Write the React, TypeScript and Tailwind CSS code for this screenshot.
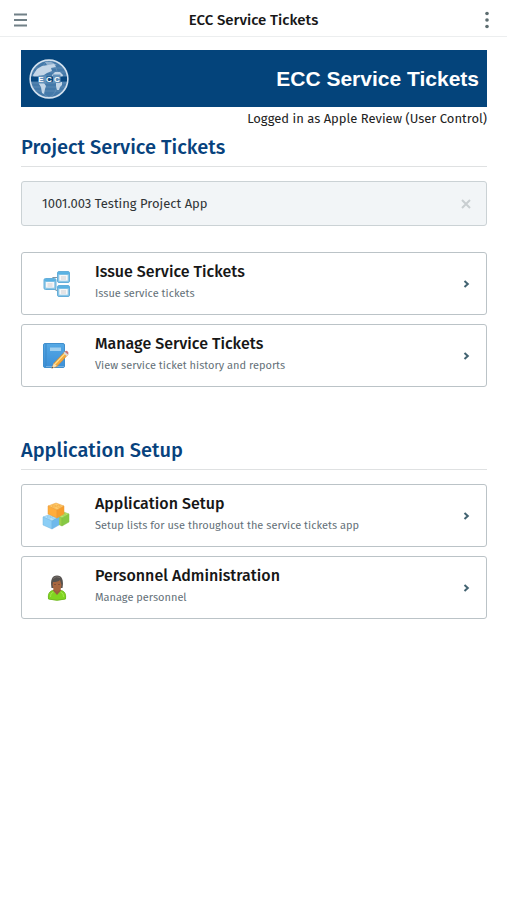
import { useState, type ReactNode } from 'react';

function GlobeLogo() {
  return (
    <svg viewBox="0 0 40 40" className="size-10" role="img" aria-label="ECC">
      <circle cx="20" cy="20" r="18.800" fill="#4479a9" stroke="#d3e1ee" strokeWidth="1.700" />
      <g stroke="#8fb0cf" strokeWidth=".6" fill="none" opacity=".55">
        <path d="M6 9h28M3 13h34M2 17h36M2 24h36M3 28h34M6 32h28" />
        <ellipse cx="20" cy="20" rx="9" ry="18" />
      </g>
      <g fill="#c4d6e7">
        <path d="M8 10l5-3 6-1 6-1 2 3-5 1 1 3-5 2-3 2-4 1-2 3-4-1-1-3z" />
        <path d="M10 23l5 1 2 3-1 3-1 5-2-1-1-6-2-3z" />
        <path d="M23 16l3-3 5 0 3 3-1 3-9 0z" />
        <path d="M27 23h6v3l-2 2-1 3-2 0-1-4z" />
        <path d="M16 3l6 0 6 3-4 1-6-1z" opacity=".6" />
      </g>
      <path d="M2 17.500h36v5H2z" fill="#07477f" />
      <path d="M9.500 16.500h8v8h-8zM24 15.500h7.500v8.500H24z" fill="#6391ba" />
      <text x="20" y="23" textAnchor="middle" fill="#fff" className="font-['Liberation_Sans',sans-serif] text-[8px] font-bold">E C C</text>
    </svg>
  );
}

function MiniWindow({ x, y }: { x: number; y: number }) {
  return (
    <g transform={`translate(${x} ${y})`}>
      <rect x=".5" y=".5" width="12" height="11" rx="1.500" fill="#8cc6e6" stroke="#64aeda" />
      <path d="M1 2.200h11" stroke="#58b1e3" strokeWidth="2.200" />
      <path d="M2.300 4h8.400v5.700H2.300z" fill="#f7f7f8" />
      <path d="M4 6h5M4 8h5" stroke="#cdcfd3" />
    </g>
  );
}

function WindowsIcon() {
  return (
    <svg viewBox="0 0 28 28" className="size-7" aria-hidden="true">
      <path d="M11 9V7.500h4M12 19l4 2" stroke="#8195a2" strokeWidth="1.200" fill="none" />
      <MiniWindow x={15} y={1} />
      <MiniWindow x={1.500} y={8} />
      <MiniWindow x={15} y={15} />
    </svg>
  );
}

function NotebookIcon() {
  return (
    <svg viewBox="0 0 28 28" className="size-7" aria-hidden="true">
      <defs>
        <linearGradient id="cover" x2="0" y2="1">
          <stop stopColor="#55a9e5" />
          <stop offset="1" stopColor="#3b8fd8" />
        </linearGradient>
      </defs>
      <rect x="1.500" y="1.500" width="21" height="24" rx="1.500" fill="url(#cover)" stroke="#418fcd" />
      <path d="M4 2v23" stroke="#3b87c7" />
      <path d="M4 24.500h18" stroke="#73afe0" />
      <rect x="8" y="5.500" width="11" height="3.500" fill="#a1d0ef" />
      <path d="M10 26l2-5L23 9.500l3 3-11 12z" fill="#f4a83c" stroke="#c9873a" strokeWidth=".6" />
      <path d="M13 22L24 10.500" stroke="#ffe08c" strokeWidth="1.100" />
      <path d="M21.500 11l2-2 3 3-2 2z" fill="#d9dce0" />
      <path d="M22.700 9.800l1-.9q1-.6 2 .5t.8 2l-.9.9z" fill="#c87579" />
      <path d="M9.500 26.500l2.400-5.200 3 2.800z" fill="#f5dfb6" />
      <path d="M9.500 26.500l.8-2 1.200 1.200z" fill="#574c46" />
    </svg>
  );
}

interface BlockProps { x: number; y: number; top: string; left: string; right: string; edge: string }

function Block({ x, y, top, left, right, edge }: BlockProps) {
  return (
    <g transform={`translate(${x} ${y})`} strokeWidth=".5" stroke={edge} strokeLinejoin="round">
      <path d="M0 4l8-3 8 3-7 4z" fill={top} />
      <path d="M0 4l9 4v8l-9-4z" fill={left} />
      <path d="M9 8l7-4v8l-7 4z" fill={right} />
      <ellipse cx="6" cy="4" rx="2" ry="1" fill={top} />
      <ellipse cx="10.500" cy="4.200" rx="2" ry="1" fill={top} />
    </g>
  );
}

function BlocksIcon() {
  return (
    <svg viewBox="0 0 28 28" className="size-7" aria-hidden="true">
      <Block x={11} y={8} top="#bce66a" left="#9bd14a" right="#86c944" edge="#80bc43" />
      <Block x={1} y={11} top="#b2e2fc" left="#8bcef6" right="#6fb9ec" edge="#73b4df" />
      <Block x={6} y={0} top="#ffca68" left="#ffad3b" right="#f79d2b" edge="#e99a38" />
    </svg>
  );
}

function PersonIcon() {
  return (
    <svg viewBox="0 0 28 28" className="size-7" aria-hidden="true">
      <path d="M6.500 25q-1-7 4-8.500h9q5 1.500 4 8.500-8.500 2.500-17 0z" fill="#80d520" stroke="#71bb22" />
      <path d="M8.500 23q-.5-4 3-5M21.500 23q.5-4-3-5" stroke="#a4e54d" fill="none" />
      <path d="M11 16.500l4 4.500 4-4.500-1-3h-6z" fill="#99613f" />
      <path d="M9.500 14q-2-12.500 5.500-12.500T20.500 14z" fill="#56524f" />
      <path d="M11 8q5 0 7-2l1.500 5q-.5 6-4.500 6.500-3.500-.5-4.500-6.500z" fill="#a8663f" />
      <path d="M11 4.500q3-3 7-1" stroke="#77706b" fill="none" />
      <path d="M12 10.500h2M16 10.500h2" stroke="#80503a" />
    </svg>
  );
}

function SectionHeading({ children }: { children: string }) {
  return (
    <h2 className="border-b border-[#dfe1e2] pt-0.5 pb-[5px] text-xl leading-7 font-medium text-[#07427d]">{children}</h2>
  );
}

function MenuCard({ icon, title, detail }: { icon: ReactNode; title: string; detail: string }) {
  return (
    <a href="#" className="flex h-[63px] items-center rounded-[3px] border border-[#bbc3c7] pr-4 pl-5">
      <span className="w-[53px] shrink-0">{icon}</span>
      <span className="min-w-0 flex-1 pb-1">
        <span className="block text-base leading-6 font-medium text-[#171717]">{title}</span>
        <span className="block text-[11px] leading-5 text-[#647078]">{detail}</span>
      </span>
      <svg viewBox="0 0 8 8" className="size-2" aria-hidden="true">
        <path d="M2.500 1L5.800 4 2.500 7" fill="none" stroke="#426371" strokeWidth="2" />
      </svg>
    </a>
  );
}

export default function App() {
  const [project, setProject] = useState('1001.003 Testing Project App');
  return (
    <div className="min-h-screen bg-white font-['Fira_Sans','Noto_Sans',sans-serif] text-[#222]">
      <header className="flex h-[37px] items-center justify-between border-b border-[#eceeef] px-3 pt-1">
        <button type="button" aria-label="Open menu" className="w-4">
          <svg viewBox="0 0 16 14" className="h-3.5 w-4">
            <path d="M2 1.500h13M2 7h13M2 12.500h13" stroke="#718087" strokeWidth="1.800" />
          </svg>
        </button>
        <h1 className="text-[15px] font-medium text-[#171717]">ECC Service Tickets</h1>
        <button type="button" aria-label="More options" className="w-4">
          <svg viewBox="0 0 16 18" className="h-[18px] w-4" fill="#5d6d70">
            <circle cx="8" cy="2.500" r="1.800" />
            <circle cx="8" cy="9" r="1.800" />
            <circle cx="8" cy="15.500" r="1.800" />
          </svg>
        </button>
      </header>
      <main className="pt-[13px] pr-5 pl-[21px]">
        <div className="flex h-[57px] items-center justify-between bg-[#04447b] px-2">
          <GlobeLogo />
          <p className="font-['Liberation_Sans',Arial,sans-serif] text-[21px] leading-7 font-bold text-white">ECC Service Tickets</p>
        </div>
        <p className="py-0.5 text-right text-[13px] leading-5">Logged in as Apple Review (User Control)</p>
        <section>
          <SectionHeading>Project Service Tickets</SectionHeading>
          <div className="mt-3.5 flex h-[45px] items-center rounded-[3px] border border-[#cbd2d5] bg-[#f2f5f7] pr-3.5 pl-5">
            <input
              aria-label="Project"
              value={project}
              onChange={(event) => setProject(event.target.value)}
              className="min-w-0 flex-1 bg-transparent text-[13px] text-[#303436] outline-none"
            />
            <button type="button" aria-label="Clear project" onClick={() => setProject('')} className="size-3">
              <svg viewBox="0 0 12 12" className="size-3">
                <path d="M2 2l8 8M10 2l-8 8" stroke="#c9ced1" strokeWidth="2" />
              </svg>
            </button>
          </div>
          <nav aria-label="Project service tickets" className="mt-[26px] flex flex-col gap-[9px]">
            <MenuCard icon={<WindowsIcon />} title="Issue Service Tickets" detail="Issue service tickets" />
            <MenuCard icon={<NotebookIcon />} title="Manage Service Tickets" detail="View service ticket history and reports" />
          </nav>
        </section>
        <section className="mt-[47px]">
          <SectionHeading>Application Setup</SectionHeading>
          <nav aria-label="Application setup" className="mt-3.5 flex flex-col gap-[9px]">
            <MenuCard icon={<BlocksIcon />} title="Application Setup" detail="Setup lists for use throughout the service tickets app" />
            <MenuCard icon={<PersonIcon />} title="Personnel Administration" detail="Manage personnel" />
          </nav>
        </section>
      </main>
    </div>
  );
}
